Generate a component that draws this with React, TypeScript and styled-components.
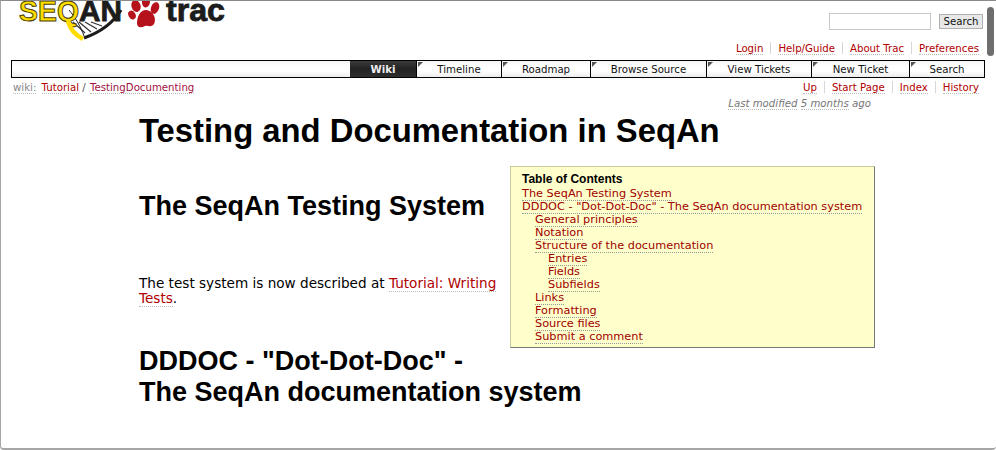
import styled, { createGlobalStyle } from 'styled-components';

const tabs = [
  { label: 'Wiki', width: 66, active: true },
  { label: 'Timeline', width: 85 },
  { label: 'Roadmap', width: 89 },
  { label: 'Browse Source', width: 116 },
  { label: 'View Tickets', width: 105 },
  { label: 'New Ticket', width: 98 },
  { label: 'Search', width: 75 },
];

const toc = [
  { label: 'The SeqAn Testing System', level: 0 },
  { label: 'DDDOC - "Dot-Dot-Doc" - The SeqAn documentation system', level: 0 },
  { label: 'General principles', level: 1 },
  { label: 'Notation', level: 1 },
  { label: 'Structure of the documentation', level: 1 },
  { label: 'Entries', level: 2 },
  { label: 'Fields', level: 2 },
  { label: 'Subfields', level: 2 },
  { label: 'Links', level: 1 },
  { label: 'Formatting', level: 1 },
  { label: 'Source files', level: 1 },
  { label: 'Submit a comment', level: 1 },
];

function Logo() {
  return (
    <LogoSvg width="230" height="41" viewBox="0 0 230 41">
      <path d="M70 20 L110 20 C104 27 95 32 84 36 C81 30 76 25 70 20 Z" fill="#fff" />
      <path d="M72 21 L84 32 M78 21 L90 31 M84 21 L96 28 M90 21 L101 25" stroke="#333" strokeWidth="1.2" />
      <path d="M83 37 C100 31 112 22 120 9" fill="none" stroke="#1c1c1c" strokeWidth="3.2" />
      <path d="M68 9 C74 16 80 26 83 35" fill="none" stroke="#1c1c1c" strokeWidth="1" />
      <LogoWord x="18" y="20" fontSize="30" textLength="60" lengthAdjust="spacingAndGlyphs" fill="#ffdd00" stroke="#4a4200" strokeWidth="1">SEQ</LogoWord>
      <path d="M67 20 C69 28 74 34 82 38" fill="none" stroke="#ffdd00" strokeWidth="4.5" />
      <LogoWord x="78" y="20" fontSize="30" textLength="43" lengthAdjust="spacingAndGlyphs" fill="#1c1c1c" stroke="#1c1c1c" strokeWidth="0.8">AN</LogoWord>
      <g fill="#b5121b">
        <ellipse cx="135" cy="5" rx="4.5" ry="6" transform="rotate(-18 135 5)" />
        <ellipse cx="145" cy="1" rx="4" ry="5.5" transform="rotate(5 145 1)" />
        <ellipse cx="154" cy="7" rx="4" ry="6" transform="rotate(20 154 7)" />
        <ellipse cx="131" cy="14" rx="3.5" ry="4.5" transform="rotate(-30 131 14)" />
        <path d="M145 9 C152 9 156 18 153 23 C150 27 147 24 144 25 C140 27 136 27 136 22 C136 16 139 9 145 9 Z" />
      </g>
      <LogoWord x="165" y="20" fontSize="31" textLength="59" lengthAdjust="spacingAndGlyphs" fill="#1c1c1c" stroke="#1c1c1c" strokeWidth="0.8">trac</LogoWord>
    </LogoSvg>
  );
}

export default function App() {
  return (
    <>
      <GlobalStyle />
      <Window>
        <Header>
          <Logo />
          <SearchForm>
            <SearchInput />
            <SearchButton>Search</SearchButton>
          </SearchForm>
        </Header>
        <MetaNav>
          <NavLink>Login</NavLink>
          <NavLink>Help/Guide</NavLink>
          <NavLink>About Trac</NavLink>
          <NavLink>Preferences</NavLink>
        </MetaNav>
        <MainNav>
          {tabs.map((tab) => (
            <Tab key={tab.label} $width={tab.width} $active={tab.active}>
              {tab.label}
            </Tab>
          ))}
        </MainNav>
        <ContextRow>
          <Crumbs>
            <WikiLabel>wiki:</WikiLabel> <CrumbLink>Tutorial</CrumbLink> <Slash>/</Slash>{' '}
            <CrumbLinkAlt>TestingDocumenting</CrumbLinkAlt>
          </Crumbs>
          <ContextNav>
            <NavLink>Up</NavLink>
            <NavLink>Start Page</NavLink>
            <NavLink>Index</NavLink>
            <NavLink>History</NavLink>
          </ContextNav>
        </ContextRow>
        <Modified>
          <ModifiedLink>Last modified</ModifiedLink> <ModifiedLink>5 months</ModifiedLink> ago
        </Modified>
        <Wiki>
          <Title>Testing and Documentation in SeqAn</Title>
          <Toc>
            <TocTitle>Table of Contents</TocTitle>
            {toc.map((item) => (
              <TocItem key={item.label} $level={item.level}>
                <TocLink>{item.label}</TocLink>
              </TocItem>
            ))}
          </Toc>
          <Heading $top={41}>The SeqAn Testing System</Heading>
          <Para>
            The test system is now described at <BodyLink>Tutorial: Writing Tests</BodyLink>.
          </Para>
          <Heading $top={40}>
            DDDOC - "Dot-Dot-Doc" -<br />
            The SeqAn documentation system
          </Heading>
        </Wiki>
        <ScrollThumb />
      </Window>
    </>
  );
}

const GlobalStyle = createGlobalStyle`
  html, body {
    margin: 0;
    padding: 0;
    background: #fff;
  }
`;

const Window = styled.div`
  position: relative;
  width: 996px;
  height: 450px;
  box-sizing: border-box;
  overflow: hidden;
  background: #fff;
  border-top: 1px solid #8a8a8a;
  border-left: 1px solid #a6a6a6;
  border-bottom: 2px solid #a6a6a6;
  border-radius: 0 0 4px 4px;
  font-family: 'DejaVu Sans', Verdana, sans-serif;
  font-size: 10.2px;
  color: #000;
`;

const Header = styled.header`
  display: flex;
  justify-content: space-between;
  height: 41px;
  padding: 0 13px 0 0;
`;

const LogoSvg = styled.svg`
  display: block;
  flex: none;
`;

const LogoWord = styled.text`
  font-family: 'Liberation Sans', Arial, sans-serif;
  font-weight: 700;
`;

const SearchForm = styled.div`
  display: flex;
  align-items: flex-start;
  gap: 8px;
  padding-top: 12px;
`;

const SearchInput = styled.div`
  width: 100px;
  height: 15px;
  background: #fff;
  border: 1px solid #c8c8c8;
`;

const SearchButton = styled.div`
  width: 42px;
  height: 13px;
  margin-top: 1px;
  background: #e8e8e8;
  border: 1px solid #b0b0b0;
  line-height: 13px;
  text-align: center;
  color: #111;
`;

const MetaNav = styled.nav`
  display: flex;
  justify-content: flex-end;
  height: 13px;
  padding-right: 17px;
  line-height: 13px;
`;

const NavLink = styled.a`
  position: relative;
  height: 12px;
  color: #b00000;
  border-bottom: 1px dotted #bbb;

  & + &::before {
    content: '';
    position: absolute;
    left: -8px;
    top: 0;
    height: 12px;
    border-left: 1px solid #d7d7d7;
  }

  & + & {
    margin-left: 15px;
  }
`;

const MainNav = styled.nav`
  display: flex;
  justify-content: flex-end;
  height: 16px;
  margin: 5px 11px 0 10px;
  border: 1px solid #000;
  background: linear-gradient(#f4f4f4, #fff 35%, #fff 60%, #ededed);
`;

const Tab = styled.div<{ $width: number; $active?: boolean }>`
  position: relative;
  flex: none;
  box-sizing: border-box;
  width: ${(p) => p.$width}px;
  line-height: 17px;
  text-align: center;
  border-left: ${(p) => (p.$active ? 'none' : '1px solid #000')};
  color: ${(p) => (p.$active ? '#eee' : '#111')};
  font-weight: ${(p) => (p.$active ? 700 : 400)};
  background: ${(p) => (p.$active ? 'linear-gradient(#3c3c3c, #222 50%, #2e2e2e)' : 'transparent')};

  &::before {
    content: '';
    display: ${(p) => (p.$active ? 'none' : 'block')};
    position: absolute;
    left: 1px;
    top: 1px;
    border-top: 5px solid #555;
    border-right: 5px solid transparent;
  }
`;

const ContextRow = styled.div`
  display: flex;
  justify-content: space-between;
  height: 16px;
  margin-top: 3px;
  padding: 0 17px 0 12px;
  line-height: 14px;
`;

const Crumbs = styled.div`
  color: #888;
`;

const WikiLabel = styled.span`
  color: #888;
  border-bottom: 1px dotted #bbb;
  margin-right: 2px;
`;

const CrumbLink = styled.a`
  color: #b00000;
  border-bottom: 1px dotted #bbb;
`;

const CrumbLinkAlt = styled(CrumbLink)`
  color: #a01040;
  margin-left: 1px;
`;

const Slash = styled.span`
  color: #556;
`;

const ContextNav = styled.nav`
  display: flex;
`;

const Modified = styled.div`
  height: 14px;
  padding-right: 125px;
  text-align: right;
  font-style: italic;
  line-height: 14px;
  color: #777;
`;

const ModifiedLink = styled.span`
  border-bottom: 1px dotted #bbb;
`;

const Wiki = styled.main`
  width: 736px;
  margin-left: 138px;
`;

const Title = styled.h1`
  margin: 1px 0 0;
  font: 700 32.8px/38px 'Liberation Sans', Arial, sans-serif;
`;

const Heading = styled.h2<{ $top: number }>`
  margin: ${(p) => p.$top}px 0 0;
  font: 700 27px/31px 'Liberation Sans', Arial, sans-serif;
`;

const Para = styled.p`
  margin: 54px 0 0;
  font-size: 13.6px;
  line-height: 15px;
`;

const BodyLink = styled.a`
  color: #b00000;
  border-bottom: 1px dotted #bbb;
`;

const Toc = styled.aside`
  float: right;
  box-sizing: border-box;
  width: 365px;
  height: 182px;
  margin: 16px 0 0 11px;
  padding: 5px 11px;
  background: #ffffcc;
  border: 1px solid #c9c9a0;
  border-right: 1px solid #777;
  border-bottom: 1px solid #777;
  font-size: 11.3px;
`;

const TocTitle = styled.div`
  font: 700 12px/15px 'Liberation Sans', Arial, sans-serif;
`;

const TocItem = styled.div<{ $level: number }>`
  padding-left: ${(p) => p.$level * 13}px;
  line-height: 13px;
`;

const TocLink = styled.a`
  color: #a00000;
  border-bottom: 1px dotted #999;
`;

const ScrollThumb = styled.div`
  position: absolute;
  right: 2px;
  top: 6px;
  width: 7px;
  height: 49px;
  border-radius: 4px;
  background: #6e6e6e;
`;
